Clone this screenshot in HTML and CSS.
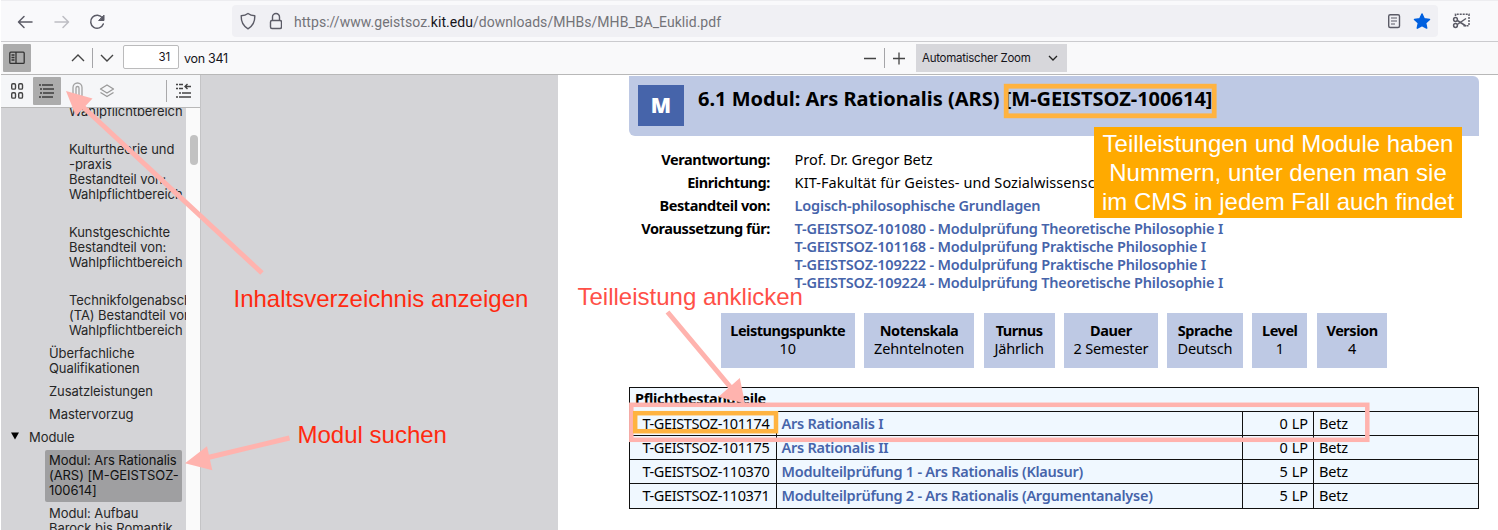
FILE: index.html
```html
<!DOCTYPE html>
<html lang="de">
<head>
<meta charset="utf-8">
<title>MHB_BA_Euklid.pdf</title>
<link rel="stylesheet" href="styles.css">
</head>
<body>
<div class="window">
  <header class="nav">
    <svg class="nav-icons" width="130" height="36" viewBox="0 0 130 36" fill="none" stroke="#5b5b66" stroke-width="1.5" stroke-linecap="round" stroke-linejoin="round">
      <path d="M31 17H18M23 11.500l-5.500 5.500 5.500 5.500"/>
      <path stroke="#bdbdc3" d="M54 17h13M62 11.500l5.500 5.500-5.500 5.500"/>
      <path d="M101.500 13A6.500 6.500 0 1 0 102.300 19"/><path fill="#5b5b66" stroke-width="1" d="M103 10.500v5h-5z"/>
    </svg>
    <div class="urlbar">
      <svg width="50" height="32" viewBox="0 0 50 32" fill="none" stroke="#5b5b66" stroke-width="1.400" stroke-linejoin="round">
        <path d="M16 8.500c2 1.600 4.300 2.200 6.800 2.300.2 6-1.600 10-6.800 13-5.200-3-7-7-6.800-13 2.500-.1 4.800-.7 6.800-2.300z"/>
        <rect x="38.500" y="15.500" width="11" height="8" rx="1.500"/><path d="M40.500 15.500V12a3.500 3.500 0 0 1 7 0v3.500"/>
      </svg>
      <div class="url">https://www.geistsoz.<b>kit.edu</b>/downloads/MHBs/MHB_BA_Euklid.pdf</div>
      <svg class="url-actions" width="56" height="32" viewBox="0 0 56 32">
        <rect x="6.700" y="9.700" width="10.800" height="12.800" rx="1.500" fill="none" stroke="#5b5b66" stroke-width="1.400"/>
        <path d="M9 13h6M9 16h6M9 19h4" stroke="#5b5b66" stroke-width="1.200"/>
        <path fill="#0060df" stroke="#0060df" stroke-width="1.500" stroke-linejoin="round" d="M40 9l2.200 4.800 5.300.6-3.900 3.500 1.100 5.200-4.700-2.600-4.700 2.600 1.100-5.200-3.900-3.500 5.300-.6z"/>
      </svg>
    </div>
    <svg class="snip" width="20" height="18" viewBox="0 0 20 18" fill="none" stroke="#5b5b66" stroke-width="1.500">
      <path stroke-dasharray="2 1" d="M3.500 4V2.200H17V13"/>
      <circle cx="3.500" cy="7.500" r="1.900"/><circle cx="3.500" cy="13.500" r="1.900"/><path d="M5.300 8.500L14 14M5.300 12.500L14 6.500"/>
      <path stroke-dasharray="2 1" d="M11.500 13.800H17"/>
    </svg>
  </header>

  <div class="toolbar">
    <div class="toggle"><svg width="16" height="14" viewBox="0 0 16 14" fill="none" stroke="#333" stroke-width="1.300"><rect x=".8" y="1.200" width="14.400" height="11.200" rx="1"/><path d="M7 1v11M2.500 4h3M2.500 6.500h3M2.500 9h3"/></svg></div>
    <svg class="pager" width="56" height="24" viewBox="0 0 56 24" fill="none" stroke="#444" stroke-width="1.400"><path d="M7 15l6-6 6 6M36 9l6 6 6-6"/><path stroke="#a5a5a8" stroke-width="1" d="M27.500 2v20"/></svg>
    <div class="page-input">31</div>
    <div class="page-count">von 341</div>
    <svg class="zoomer" width="50" height="24" viewBox="0 0 50 24" stroke="#444" stroke-width="1.300"><path d="M4 12.500h12M33 12.500h12M39 6.500v12"/><path stroke="#a5a5a8" stroke-width="1" d="M24.500 2v20"/></svg>
    <div class="zoom-select"><span>Automatischer Zoom</span><svg width="10" height="8" viewBox="0 0 10 8" fill="none" stroke="#222" stroke-width="1.300"><path d="M1 2l4 4 4-4"/></svg></div>
  </div>

  <main class="viewer">
    <aside class="sidebar">
      <div class="side-tools">
        <svg width="199" height="32" viewBox="0 0 199 32" fill="none">
          <rect x="32" y="2" width="28" height="28" rx="1" fill="#acacac"/>
          <g stroke="#444" stroke-width="1.400"><rect x="10.700" y="8.700" width="3.800" height="5.400" rx="1.200"/><rect x="17.700" y="8.700" width="3.800" height="5.400" rx="1.200"/><rect x="10.700" y="17.700" width="3.800" height="5.400" rx="1.200"/><rect x="17.700" y="17.700" width="3.800" height="5.400" rx="1.200"/></g>
          <path stroke="#3c3c3c" stroke-width="1.500" d="M38 10h2M41 10h11M39 14h2M42 14h11M39 18h2M42 18h11M38 22h2M41 22h11"/>
          <path stroke="#a2a2a2" stroke-width="1.300" d="M72 20v-7.500a4.500 4.500 0 0 1 9 0V20a3 3 0 0 1-6 0v-7a1.500 1.500 0 0 1 3 0v7"/>
          <path stroke="#999" stroke-width="1.300" stroke-linejoin="round" d="M99.500 14l6.500-4 6.500 4-6.500 4zM99.500 17.500l6.500 4 6.500-4"/>
          <path stroke="#a9a9ab" d="M165.500 5v22"/>
          <path stroke="#444" stroke-width="1.400" d="M175 9.500h2M178 9.500h4M175 13.500h2M178 13.500h4M178 18h2M181 18h9M175 22h2M178 22h12M184 11.500h6M186.500 9l-2.500 2.500 2.500 2.500"/>
        </svg>
      </div>
      <div class="outline">
        <div class="tree">
          <div class="item deep first">Wahlpflichtbereich<br>&nbsp;</div>
          <div class="item deep">Kulturtheorie und<br>-praxis<br>Bestandteil von:<br>Wahlpflichtbereich<br>&nbsp;</div>
          <div class="item deep">Kunstgeschichte<br>Bestandteil von:<br>Wahlpflichtbereich<br>&nbsp;</div>
          <div class="item deep">Technikfolgenabschätzung<br>(TA) Bestandteil von:<br>Wahlpflichtbereich</div>
          <div class="item">Überfachliche<br>Qualifikationen</div>
          <div class="item">Zusatzleistungen</div>
          <div class="item">Mastervorzug</div>
          <div class="item root"><svg width="8" height="8" viewBox="0 0 8 8"><path d="M0 .5h8L4 7.500z"/></svg>Module</div>
          <div class="item selected">Modul: Ars Rationalis<br>(ARS) [M-GEISTSOZ-<br>100614]</div>
          <div class="item">Modul: Aufbau<br>Barock bis Romantik</div>
        </div>
        <div class="scrollbar"><div class="thumb"></div></div>
      </div>
    </aside>

    <section class="canvas">
      <article class="page">
        <div class="module-head"><div class="badge">M</div><h1>6.1 Modul: Ars Rationalis (ARS) [M-GEISTSOZ-100614]</h1></div>
        <dl class="facts">
          <dt>Verantwortung:</dt><dd>Prof. Dr. Gregor Betz</dd>
          <dt>Einrichtung:</dt><dd class="wide">KIT-Fakultät für Geistes- und Sozialwissenschaften</dd>
          <dt>Bestandteil von:</dt><dd class="link">Logisch-philosophische Grundlagen</dd>
          <dt>Voraussetzung für:</dt><dd class="link">T-GEISTSOZ-101080 - Modulprüfung Theoretische Philosophie I<br>T-GEISTSOZ-101168 - Modulprüfung Praktische Philosophie I<br>T-GEISTSOZ-109222 - Modulprüfung Praktische Philosophie I<br>T-GEISTSOZ-109224 - Modulprüfung Theoretische Philosophie I</dd>
        </dl>
        <div class="cards">
          <div><b>Leistungspunkte</b>10</div><div><b>Notenskala</b>Zehntelnoten</div><div><b>Turnus</b>Jährlich</div><div><b>Dauer</b>2 Semester</div><div><b>Sprache</b>Deutsch</div><div><b>Level</b>1</div><div><b>Version</b>4</div>
        </div>
        <div class="parts">
          <div class="parts-title">Pflichtbestandteile</div>
          <div class="part"><span>T-GEISTSOZ-101174</span><span>Ars Rationalis I</span><span>0 LP</span><span>Betz</span></div>
          <div class="part"><span>T-GEISTSOZ-101175</span><span>Ars Rationalis II</span><span>0 LP</span><span>Betz</span></div>
          <div class="part"><span>T-GEISTSOZ-110370</span><span>Modulteilprüfung 1 - Ars Rationalis (Klausur)</span><span>5 LP</span><span>Betz</span></div>
          <div class="part"><span>T-GEISTSOZ-110371</span><span>Modulteilprüfung 2 - Ars Rationalis (Argumentanalyse)</span><span>5 LP</span><span>Betz</span></div>
        </div>
      </article>
    </section>
  </main>

  <svg class="marks" width="1498" height="530" viewBox="0 0 1498 530">
    <g fill="none">
      <rect x="631.300" y="404.800" width="736" height="35" stroke="#ffb3ae" stroke-width="4.500"/>
      <rect x="635.200" y="413.200" width="140.800" height="18" stroke="#ffb340" stroke-width="4.500"/>
      <rect x="1006.200" y="86.200" width="208" height="29.600" stroke="#ffb340" stroke-width="4.800"/>
      <path stroke="#ffb3ae" stroke-width="5" d="M262 273L82 106M289.500 438L208 457.500M667.500 312L732 389"/>
    </g>
    <path fill="#ffb3ae" d="M66 91l26.500 7.500L76 116zM185 463.300l22-17 5.300 24zM745 403.500l-5.200-25.500-21.500 19z"/>
  </svg>
  <div class="note contents">Inhaltsverzeichnis anzeigen</div>
  <div class="note search">Modul suchen</div>
  <div class="note click">Teilleistung anklicken</div>
  <div class="note callout">Teilleistungen und Module haben<br>Nummern, unter denen man sie<br>im CMS in jedem Fall auch findet</div>
</div>
</body>
</html>
```
FILE: styles.css
```css
* { box-sizing: border-box; }
body { margin: 0; background: #fff; }
.window { position: relative; width: 1498px; height: 530px; overflow: hidden; padding-left: 1px; display: flex; flex-direction: column; font-family: Inter, "Liberation Sans", sans-serif; color: #15141a; }
.window svg { display: block; flex: none; }

.nav { height: 42px; flex: none; display: flex; align-items: center; background: #f9f9fb; border-top: 1px solid #ededf0; border-bottom: 1px solid #cbcbce; }
.nav-icons { margin-top: 4px; }
.urlbar { width: 1206px; height: 32px; margin-left: 101px; border-radius: 4px; background: #f0f0f4; display: flex; align-items: center; }
.url { flex: 1; margin: 2px 0 0 12px; font: 14px/20px Roboto, sans-serif; letter-spacing: .04px; color: #737378; }
.url b { font-weight: 400; color: #15141a; }
.snip { margin-left: 14px; }

.toolbar { height: 33px; flex: none; display: flex; align-items: center; background: #f9f9fa; border-bottom: 1px solid #b8b8b8; font-size: 12.500px; }
.toggle { width: 28px; height: 28px; margin-left: 2px; border-radius: 1px; background: #acacac; display: grid; place-items: center; }
.pager { margin-left: 34px; }
.page-input { width: 56px; height: 24px; margin: -2px 0 0 2px; padding-right: 8px; border: 1px solid #bbbbbc; border-radius: 2px; background: #fff; font-size: 11.500px; line-height: 22px; letter-spacing: -.2px; text-align: right; }
.page-count { width: 671px; padding: 1px 0 0 5px; letter-spacing: -.3px; }
.zoomer { margin-left: 10px; }
.zoom-select { width: 151px; height: 28px; margin-left: 6px; padding: 0 9px 0 6px; background: #d7d7db; display: flex; align-items: center; justify-content: space-between; font-size: 11.500px; letter-spacing: -.26px; }

.viewer { flex: 1; min-height: 0; display: flex; }
.sidebar { width: 200px; flex: none; display: flex; flex-direction: column; border-right: 1px solid #c4c4c6; }
.side-tools { height: 33px; flex: none; background: #f5f6f8; border-bottom: 1px solid #b8b8b8; }
.outline { flex: 1; min-height: 0; display: flex; overflow: hidden; background: #d4d4d7; }
.tree { width: 185px; overflow: hidden; font-size: 13px; line-height: 15px; letter-spacing: -.07px; color: #262626; white-space: nowrap; }
.item { width: 137px; margin: 0 0 1px 44px; padding: 3px 0 4px 4px; border-radius: 2px; }
.item.first { margin-top: -7px; }
.item.deep { margin-left: 64px; }
.item.root { margin-left: 10px; padding-left: 0; display: flex; gap: 10px; }
.item.root svg { margin-top: 2px; }
.item.selected { background: #9f9fa1; color: #111; }
.scrollbar { flex: 1; padding: 27px 2px 0 4px; background: #fafafa; }
.thumb { width: 8px; height: 30px; border-radius: 4px; background: #c2c2c2; }

.canvas { flex: 1; padding-left: 357px; background: #d4d4d7; }
.page { height: 455px; padding: 1px 19px 0 71px; background: #fff; font: 14.500px/18px "Noto Sans", "Open Sans", sans-serif; color: #000; }
.module-head { height: 60px; padding: 9px; border-radius: 0 6px 0 6px; background: #bec9e4; display: flex; }
.badge { width: 46px; height: 41px; padding-bottom: 2px; background: #4664aa; color: #fff; display: grid; place-items: center; font-size: 21px; font-weight: 900; }
.module-head h1 { margin: 0 0 0 14px; font-size: 20px; line-height: 28px; font-weight: 700; white-space: nowrap; }
.facts { margin: 14px 0 0; display: grid; grid-template-columns: 141px 1fr; column-gap: 24.600px; row-gap: 5px; letter-spacing: -.05px; white-space: nowrap; }
.facts dt { text-align: right; font-weight: 700; letter-spacing: -.43px; }
.facts dd { margin: 0; }
.facts .wide { letter-spacing: .09px; }
.facts .link { color: #4664aa; font-weight: 600; letter-spacing: -.19px; }
.cards { height: 55px; margin: 22px 0 0 92px; display: grid; grid-template-columns: 133.500px 110.500px 71px 94px 75.500px 55.500px 70.500px; gap: 9.300px; text-align: center; letter-spacing: -.15px; }
.cards div { padding-top: 8px; background: #bec9e4; }
.cards b { display: block; font-weight: 700; letter-spacing: -.46px; }
.parts { margin-top: 19px; border: 1px solid #111; background: #f0f8ff; line-height: 23px; }
.parts-title { height: 23px; padding-left: 5px; font-weight: 700; letter-spacing: -.34px; line-height: 21px; }
.part { height: 24px; display: grid; grid-template-columns: 146px 466px 71px 1fr; border-top: 1px solid #111; }
.part:last-child { height: 25px; }
.part span + span { border-left: 1px solid #111; }
.part span:nth-child(1) { padding-left: 12.500px; letter-spacing: -.4px; }
.part span:nth-child(2) { padding-left: 4.500px; color: #4664aa; font-weight: 600; letter-spacing: -.26px; }
.part span:nth-child(3) { padding-right: 5px; text-align: right; }
.part span:nth-child(4) { padding-left: 5px; letter-spacing: -.2px; }

.marks { position: absolute; left: 0; top: 0; }
.note { position: absolute; font: 24px/29px "Liberation Sans", Arial, sans-serif; white-space: nowrap; color: #ff2a10; }
.contents { left: 233.500px; top: 284px; }
.search { left: 297.500px; top: 420px; }
.click { left: 577.500px; top: 282px; color: #ff5048; }
.callout { left: 1094px; top: 127px; width: 368px; height: 91px; padding-top: 2px; background: #ffaa00; color: #fff; text-align: center; }
```
